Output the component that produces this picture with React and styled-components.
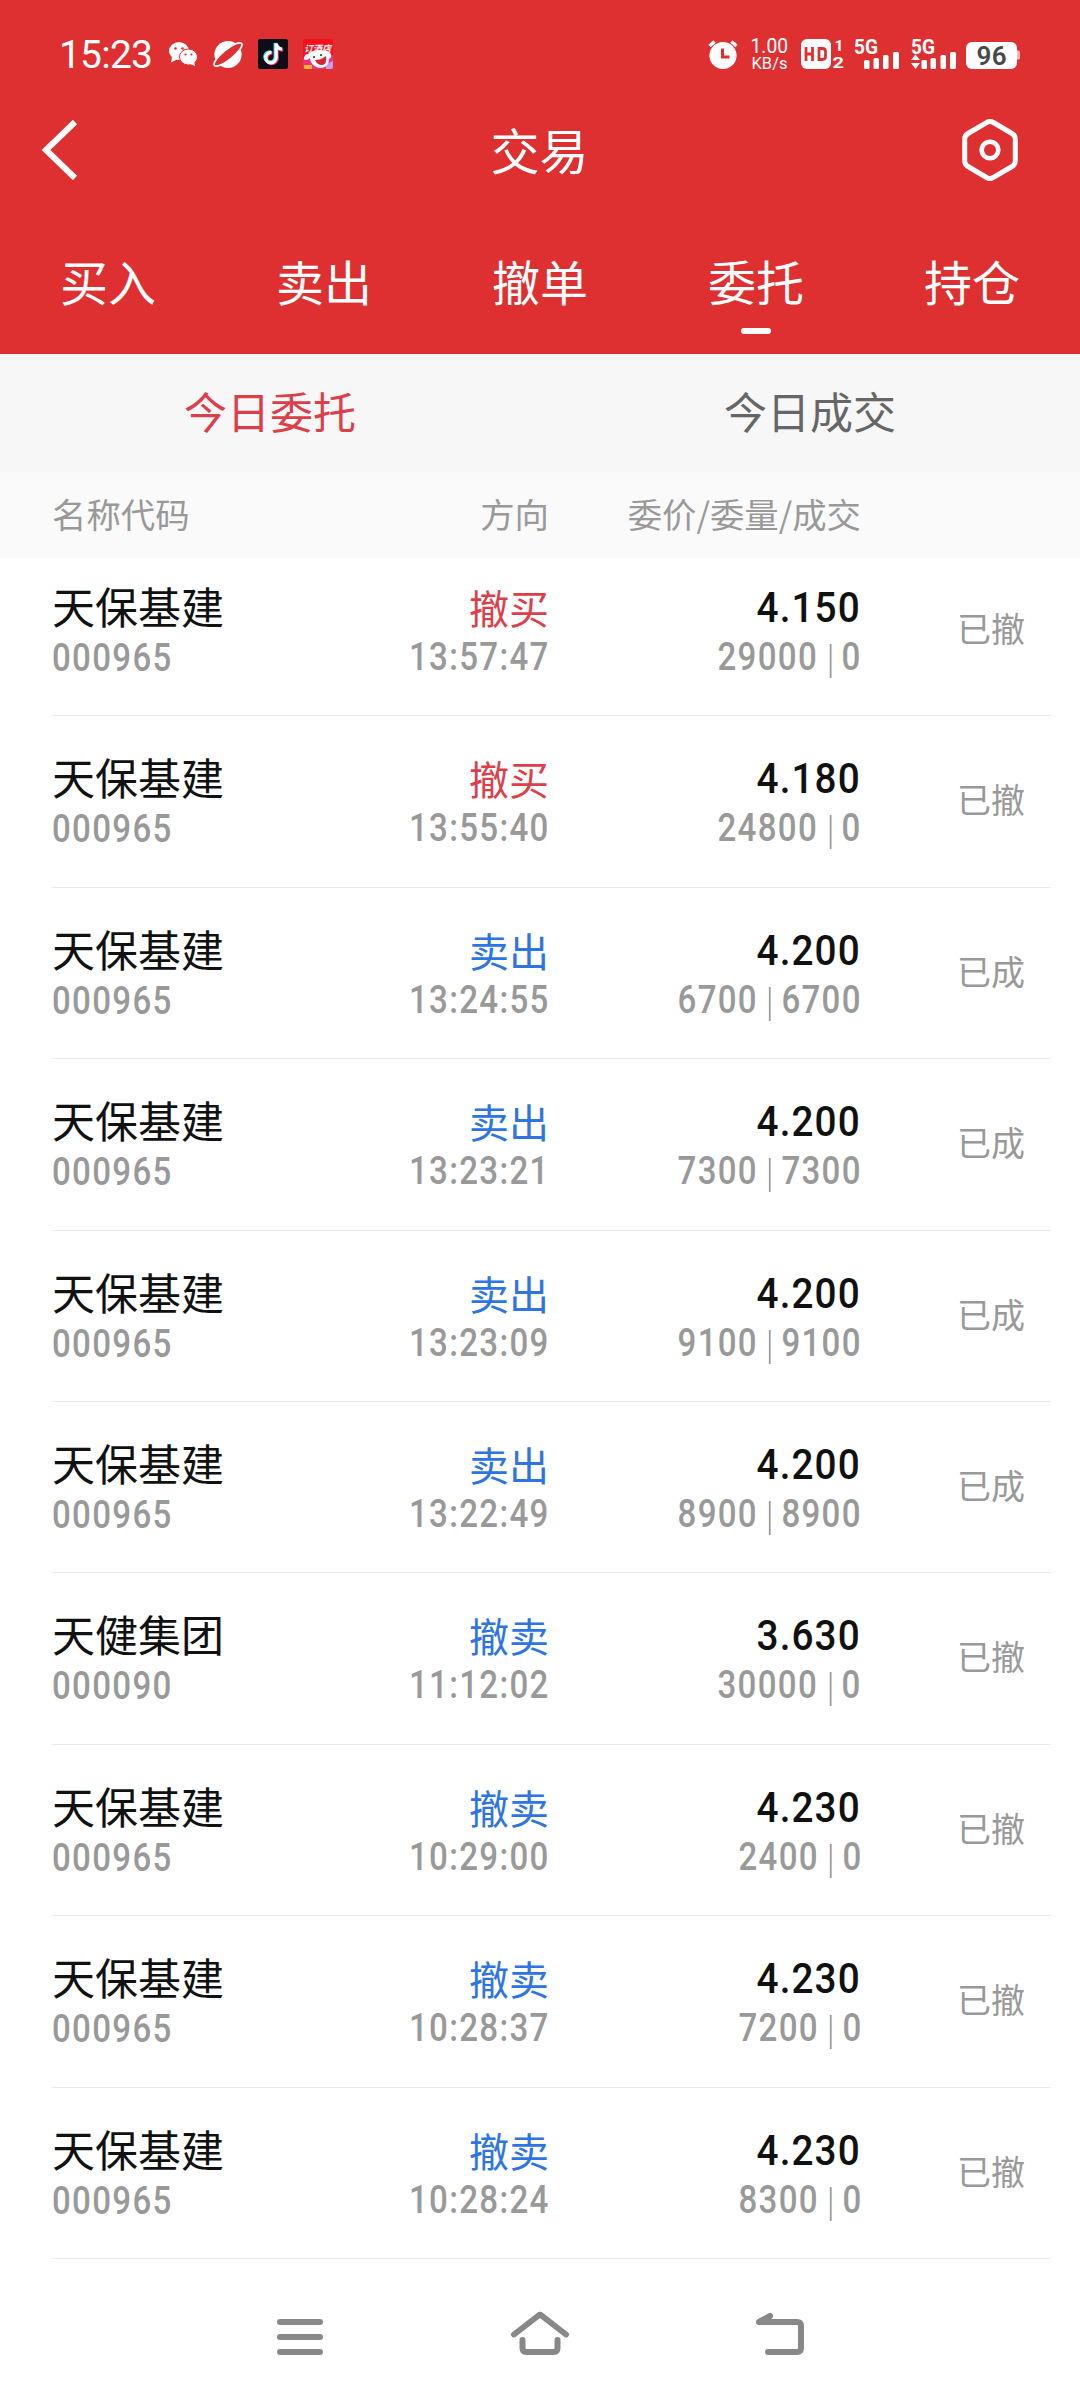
import styled, { createGlobalStyle } from 'styled-components';

const orders = [
  { name: '天保基建', code: '000965', side: '撤买', time: '13:57:47', price: '4.150', amount: '29000', filled: '0', status: '已撤' },
  { name: '天保基建', code: '000965', side: '撤买', time: '13:55:40', price: '4.180', amount: '24800', filled: '0', status: '已撤' },
  { name: '天保基建', code: '000965', side: '卖出', time: '13:24:55', price: '4.200', amount: '6700', filled: '6700', status: '已成' },
  { name: '天保基建', code: '000965', side: '卖出', time: '13:23:21', price: '4.200', amount: '7300', filled: '7300', status: '已成' },
  { name: '天保基建', code: '000965', side: '卖出', time: '13:23:09', price: '4.200', amount: '9100', filled: '9100', status: '已成' },
  { name: '天保基建', code: '000965', side: '卖出', time: '13:22:49', price: '4.200', amount: '8900', filled: '8900', status: '已成' },
  { name: '天健集团', code: '000090', side: '撤卖', time: '11:12:02', price: '3.630', amount: '30000', filled: '0', status: '已撤' },
  { name: '天保基建', code: '000965', side: '撤卖', time: '10:29:00', price: '4.230', amount: '2400', filled: '0', status: '已撤' },
  { name: '天保基建', code: '000965', side: '撤卖', time: '10:28:37', price: '4.230', amount: '7200', filled: '0', status: '已撤' },
  { name: '天保基建', code: '000965', side: '撤卖', time: '10:28:24', price: '4.230', amount: '8300', filled: '0', status: '已撤' },
];

const tabs = ['买入', '卖出', '撤单', '委托', '持仓'];

function StatusIcons() {
  return (
    <svg width="170" height="34" viewBox="166 37 170 34">
      {/* wechat */}
      <ellipse cx="179" cy="51" rx="10" ry="9" fill="#fff" />
      <path d="M172 57l-1 5.500 6-3z" fill="#fff" />
      <circle cx="175.500" cy="48.500" r="1.300" fill="#de3031" />
      <circle cx="182.500" cy="48.500" r="1.300" fill="#de3031" />
      <ellipse cx="188.500" cy="57" rx="9" ry="8" fill="#fff" stroke="#de3031" strokeWidth="1" />
      <path d="M190 64l5 2-1-5z" fill="#fff" />
      <circle cx="185.500" cy="54.500" r="1.100" fill="#de3031" />
      <circle cx="191.500" cy="54.500" r="1.100" fill="#de3031" />
      {/* planet */}
      <circle cx="228" cy="54.500" r="13.600" fill="#fff" />
      <ellipse cx="228" cy="54.500" rx="17.500" ry="5" transform="rotate(-39 228 54.500)" fill="#de3031" stroke="#fff" strokeWidth="1.800" />
      {/* tiktok */}
      <rect x="258" y="39" width="30" height="30" rx="2" fill="#0b0d18" />
      <g fill="none" strokeWidth="3.200">
        <path d="M270.500 51.800a5.200 5.200 0 1 0 4.700 5.200V43c.5 3.500 3 5.500 6 5.700" stroke="#25f4ee" />
        <path d="M272.500 53.200a5.200 5.200 0 1 0 4.700 5.200V44.500c.5 3.500 3 5.500 6 5.700" stroke="#fe2c55" />
        <path d="M271.500 52.500a5.200 5.200 0 1 0 4.700 5.200V43.500c.5 3.500 3 5.500 6 5.700" stroke="#fff" />
      </g>
      {/* hotel app */}
      <rect x="303" y="39" width="30" height="30" rx="2" fill="#f8101c" />
      <path d="M303 58l30-3v12a2 2 0 0 1-2 2h-26a2 2 0 0 1-2-2z" fill="#f0307c" />
      <path d="M326 64l7-3v6a2 2 0 0 1-2 2h-5z" fill="#c79bf0" />
      <path d="M304 65h8v4h-7l-1-1z" fill="#ffb52e" />
      <path d="M308 54c-4 0-5 5-3 6 2 0 4-1 5-2 0 5 4 9 10 10 6 0 9-4 9-9 3-1 3-5 0-7-5-2-16-3-21 2z" fill="#fff" />
      <path d="M315 60c4 0 7-1 11-4 1 6-1 9-4 9s-6-2-7-5z" fill="#d8232c" />
      <circle cx="314" cy="57" r="1" fill="#222" />
      <circle cx="321" cy="55" r="1" fill="#222" />
      <text x="304" y="51.500" fontSize="9" fontWeight="700" fontStyle="italic" fill="#fff" fontFamily="Noto Sans CJK SC, sans-serif">订酒店</text>
    </svg>
  );
}

function SystemIcons() {
  return (
    <svg width="316" height="60" viewBox="706 24 316 60">
      {/* alarm */}
      <circle cx="723" cy="55.500" r="13.600" fill="#fff" />
      <path d="M709.500 46l5-4.500M736.500 46l-5-4.500" stroke="#fff" strokeWidth="3.400" />
      <path d="M722.500 48.500v8.500h7" fill="none" stroke="#de3031" strokeWidth="3" />
      {/* network speed */}
      <g fill="#fff" fontFamily="Roboto, sans-serif">
        <text x="750.500" y="53" fontSize="19.500" textLength="37.500" lengthAdjust="spacingAndGlyphs">1.00</text>
        <text x="751.500" y="69" fontSize="17" textLength="36" lengthAdjust="spacingAndGlyphs">KB/s</text>
      </g>
      {/* HD */}
      <rect x="801" y="39" width="30" height="30" rx="6" fill="#fff" />
      <path d="M806 47v14M812.500 47v14M806 54h6.500M819 48.500v11h3.500q3 0 3-3v-5q0-3-3-3z" fill="none" stroke="#de3031" strokeWidth="2.800" />
      <g fill="#fff" fontFamily="Roboto, sans-serif" fontWeight="700">
        <text x="834.500" y="50.500" fontSize="15.500">1</text>
        <text x="832.500" y="67.800" fontSize="15.500" textLength="11.500" lengthAdjust="spacingAndGlyphs">2</text>
        <text x="854" y="53.800" fontSize="20" textLength="24" lengthAdjust="spacingAndGlyphs">5G</text>
        <text x="911" y="53.800" fontSize="20" textLength="24" lengthAdjust="spacingAndGlyphs">5G</text>
      </g>
      {/* signal bars */}
      <g fill="#fff">
        <rect x="864" y="60" width="5.500" height="9" rx="1.500" />
        <rect x="873.500" y="58" width="5.500" height="11" rx="1.500" />
        <rect x="883" y="55" width="5.500" height="14" rx="1.500" />
        <rect x="893" y="52" width="6" height="17" rx="1.500" />
        <rect x="921.500" y="60" width="5.500" height="9" rx="1.500" />
        <rect x="930.500" y="58" width="5.500" height="11" rx="1.500" />
        <rect x="940.500" y="55" width="5.500" height="14" rx="1.500" />
        <rect x="950" y="52" width="6" height="17" rx="1.500" />
        <path d="M915.500 54.500l4.500 5.500h-9zM915.500 69l4.500-6h-9z" />
      </g>
      {/* battery */}
      <rect x="966" y="42" width="51" height="27" rx="6" fill="#fff" />
      <path d="M1017 50.500h1.500q1.500 0 1.500 1.500v6q0 1.500-1.500 1.500h-1.500z" fill="#fff" opacity=".65" />
      <text x="991.500" y="65" textAnchor="middle" fontSize="26" fontWeight="600" fill="#484848" textLength="30" fontFamily="Roboto, sans-serif">96</text>
    </svg>
  );
}

function App() {
  return (
    <>
      <GlobalStyle />
      <Page>
        <Header>
          <StatusBar>
            <Clock>15:23</Clock>
            <StatusIcons />
            <Spacer />
            <SystemIcons />
          </StatusBar>

          <TitleBar>
            <svg width="58" height="64" viewBox="0 0 58 64">
              <path d="M35 4L6 32l29 28" fill="none" stroke="#fff" strokeWidth="6" />
            </svg>
            <Title>交易</Title>
            <svg width="58" height="64" viewBox="0 0 58 64">
              <path
                d="M26 4.300q3-1.700 6 0l19 11.200q3.300 2 3.300 5.500v22q0 3.500-3.300 5.500L32 59.700q-3 1.700-6 0L7 48.500Q3.700 46.500 3.700 43V21q0-3.500 3.300-5.500z"
                fill="none"
                stroke="#fff"
                strokeWidth="5"
              />
              <circle cx="29" cy="32" r="8.300" fill="none" stroke="#fff" strokeWidth="4.600" />
            </svg>
          </TitleBar>

          <Tabs>
            {tabs.map(tab => (
              <Tab key={tab} $active={tab === '委托'}>
                {tab}
              </Tab>
            ))}
          </Tabs>
        </Header>

        <SubTabs>
          <SubTab $active>今日委托</SubTab>
          <SubTab>今日成交</SubTab>
        </SubTabs>

        <TableHead>
          <span>名称代码</span>
          <span>方向</span>
          <span>委价/委量/成交</span>
        </TableHead>

        <List>
          {orders.map(order => (
            <Row key={order.time}>
              <Cell>
                <Name>{order.name}</Name>
                <Numbers $shift={2}>{order.code}</Numbers>
              </Cell>
              <Cell $right>
                <Side $buy={order.side === '撤买'}>{order.side}</Side>
                <Numbers $right $shift={1}>{order.time}</Numbers>
              </Cell>
              <Cell $right>
                <Price>{order.price}</Price>
                <Numbers $right $shift={1}>
                  {order.amount}
                  <Divider />
                  {order.filled}
                </Numbers>
              </Cell>
              <Status>{order.status}</Status>
            </Row>
          ))}
        </List>

        <NavBar>
          <svg width="48" height="48" viewBox="276 2311 48 48">
            <path d="M280 2322h40M280 2337h40M280 2352h40" />
          </svg>
          <svg width="60" height="48" viewBox="510 2311 60 48">
            <path d="M514 2334.500L538.500 2315.500q1.500-1.200 3 0L566 2334.500M522.500 2340v8q0 4 4 4h27q4 0 4-4v-8" />
          </svg>
          <svg width="52" height="48" viewBox="754 2311 52 48">
            <path d="M768 2352h29q4 0 4-4v-22q0-4-4-4h-38l11-6" />
          </svg>
        </NavBar>
      </Page>
    </>
  );
}

export default App;

const GlobalStyle = createGlobalStyle`
  * {
    box-sizing: border-box;
  }

  body {
    margin: 0;
    background: #fff;
    font-family: 'Noto Sans CJK SC', sans-serif;
  }

  svg {
    display: block;
    flex-shrink: 0;
  }
`;

const Page = styled.div`
  display: flex;
  flex-direction: column;
  width: 1080px;
  height: 2400px;
  overflow: hidden;
  background: #fff;
`;

const Header = styled.header`
  flex-shrink: 0;
  height: 354px;
  background: #de3031;
  color: #fff;
`;

const StatusBar = styled.div`
  display: flex;
  align-items: center;
  height: 108px;
  padding: 0 58px 0 59px;
`;

const Clock = styled.span`
  width: 107px;
  margin-top: 1px;
  font-family: Roboto, sans-serif;
  font-size: 39px;
  letter-spacing: -0.8px;
`;

const Spacer = styled.div`
  flex: 1;
`;

const TitleBar = styled.div`
  display: flex;
  align-items: center;
  justify-content: space-between;
  height: 84px;
  padding: 0 61px 0 40px;
`;

const Title = styled.h1`
  margin: 0 0 2px 20px;
  font-size: 49px;
  font-weight: 400;
  line-height: 72px;
`;

const Tabs = styled.nav`
  display: grid;
  grid-template-columns: repeat(5, 1fr);
  height: 162px;
`;

const Tab = styled.div`
  display: flex;
  flex-direction: column;
  align-items: center;
  padding-top: 53px;
  font-size: 48px;
  line-height: 70px;

  &::after {
    content: '';
    width: 30px;
    height: 6px;
    margin-top: 13px;
    border-radius: 3px;
    background: ${props => (props.$active ? '#fff' : 'transparent')};
  }
`;

const SubTabs = styled.div`
  display: grid;
  grid-template-columns: 1fr 1fr;
  flex-shrink: 0;
  height: 118px;
  background: #f7f7f7;
`;

const SubTab = styled.div`
  font-size: 43px;
  line-height: 113px;
  text-align: center;
  color: ${props => (props.$active ? '#dc3f49' : '#666')};
`;

const columns = '261px 236px 312px 164px';

const TableHead = styled.div`
  display: grid;
  grid-template-columns: ${columns};
  flex-shrink: 0;
  height: 86px;
  padding-left: 52px;
  background: #fafafa;
  font-size: 34.400px;
  line-height: 82px;
  color: #999;

  span + span {
    text-align: right;
  }
`;

const List = styled.main`
  display: flex;
  flex-direction: column;
  flex-shrink: 0;
  height: 1700px;
  margin-top: -13px;
  padding-left: 52px;
`;

const Row = styled.div`
  display: grid;
  grid-template-columns: ${columns};
  flex-shrink: 0;
  width: 999px;
  height: 171.400px;
  border-bottom: 1px solid #ebebeb;
`;

const Cell = styled.div`
  display: flex;
  flex-direction: column;
  align-items: ${props => (props.$right ? 'flex-end' : 'flex-start')};
  padding-top: 33px;
`;

const Name = styled.div`
  height: 56px;
  font-size: 43px;
  line-height: 54px;
  color: #111;
`;

const Side = styled.div`
  height: 56px;
  padding-top: 1px;
  font-size: 40px;
  line-height: 56px;
  color: ${props => (props.$buy ? '#dc3f49' : '#2e74e2')};
`;

const Price = styled.div`
  height: 56px;
  font-family: Roboto, sans-serif;
  font-size: 43px;
  font-weight: 500;
  line-height: 58px;
  letter-spacing: 1.2px;
  color: #111;
  transform: scaleX(0.9);
  transform-origin: right;
`;

const Numbers = styled.div`
  display: flex;
  padding-top: ${props => props.$shift || 0}px;
  margin-right: ${props => (props.$right ? -1 : 0)}px;
  font-family: Roboto, sans-serif;
  font-size: 38px;
  font-weight: 500;
  line-height: 44px;
  letter-spacing: 1.5px;
  color: #999;
  transform: scaleX(0.87);
  transform-origin: ${props => (props.$right ? 'right' : 'left')};
`;

const Divider = styled.span`
  width: 2px;
  height: 34px;
  margin: 9px 12px 0 13px;
  background: #999;
`;

const Status = styled.div`
  padding-top: 58px;
  font-size: 34px;
  line-height: 50px;
  text-align: right;
  color: #999;
`;

const NavBar = styled.footer`
  display: grid;
  grid-template-columns: repeat(3, 240px);
  justify-content: center;
  justify-items: center;
  align-items: center;
  flex-shrink: 0;
  height: 130px;
  margin-top: 25px;

  path {
    fill: none;
    stroke: #888;
    stroke-width: 6;
    stroke-linecap: round;
    stroke-linejoin: round;
  }
`;
